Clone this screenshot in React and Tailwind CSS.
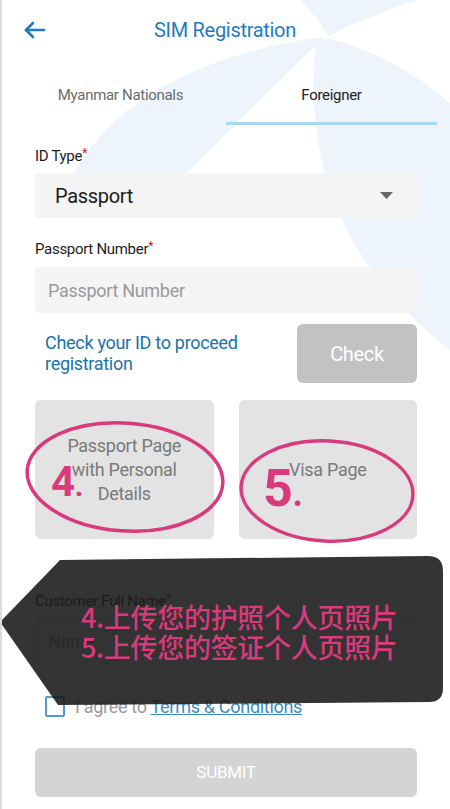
import React from 'react';

// red asterisk for required labels
const Req = () => <span className="text-[#c8102e] text-[12px] leading-none relative -top-[4px]">*</span>;

const Watermark = () => (
  <svg className="absolute left-0 top-0 pointer-events-none" width="450" height="400" viewBox="0 0 450 400">
    <path d="M298 0 L415 0 C380 12 350 24 326 36 C318 22 308 10 298 0 Z" fill="#edf4fb" />
    <path d="M62 200 C85 120 180 55 322 37 L186 172 C140 180 100 190 62 200 Z" fill="#edf4fb" />
    <path d="M314 40 C305 140 320 250 450 352 L450 105 C410 70 370 50 326 38 Z" fill="#edf4fb" />
  </svg>
);

const BackArrow = () => (
  <svg width="22" height="18" viewBox="0 0 22 18" fill="none" stroke="#1f7bc0" strokeWidth="2.6" strokeLinecap="round" strokeLinejoin="round">
    <path d="M20 9H2" />
    <path d="M9 2L2 9l7 7" />
  </svg>
);

const Annotations = () => (
  <>
    <svg className="absolute -left-[2px] top-0 pointer-events-none" width="450" height="809" viewBox="0 0 450 809">
      <ellipse cx="125" cy="477" rx="98" ry="54" transform="rotate(4 125 477)" fill="none" stroke="#d83a7c" strokeWidth="3.5" />
      <ellipse cx="327" cy="491" rx="86" ry="50" transform="rotate(3 327 491)" fill="none" stroke="#d83a7c" strokeWidth="3.5" />
      <path d="M60 560 L428 556 Q443 556 443 571 L443 688 Q443 702 429 702 L58 705 L0 622 Z" fill="rgba(27,27,27,0.89)" />
    </svg>
    <div className="absolute left-[49px] top-[461px] text-[42px] leading-none font-bold text-[#d83a7c] font-['Roboto',sans-serif]">4<span className="text-[30px]">.</span></div>
    <div className="absolute left-[261px] top-[463px] text-[52px] leading-none font-bold text-[#d83a7c] font-['Roboto',sans-serif]">5<span className="text-[36px]">.</span></div>
    <div className="absolute left-[79px] top-[602px] text-[27px] leading-[30px] font-medium text-[#d83a7c] font-['Noto_Sans_CJK_SC',sans-serif] whitespace-nowrap">
      <div>4.上传您的护照个人页照片</div>
      <div>5.上传您的签证个人页照片</div>
    </div>
  </>
);

export default function App() {
  return (
    <div className="relative w-[450px] h-[809px] overflow-hidden bg-white border-l-2 border-[#dcdcdc] font-['Roboto',sans-serif] tracking-[-0.3px]">
      <Watermark />

      <div className="relative">
        {/* header */}
        <div className="flex items-center h-[60px] -ml-[2px]">
          <div className="w-[60px] pl-[24px] flex items-center"><BackArrow /></div>
          <div className="flex-1 text-center text-[20px] leading-[24px] text-[#1f7bbf]">SIM Registration</div>
          <div className="w-[60px]" />
        </div>

        {/* tabs */}
        <div className="flex px-[13px]">
          <div className="flex-1 text-center pt-[25px] pb-[20px] text-[15px] leading-[20px] text-[#6b6b6b]">Myanmar Nationals</div>
          <div className="flex-1 text-center pt-[25px] pb-[17px] text-[15px] leading-[20px] text-[#222] border-b-[3px] border-[#a9d6f2]">Foreigner</div>
        </div>

        <div className="px-[33px]">
          <div className="mt-[21px] text-[15px] leading-[20px] text-[#1c1c1c]">ID Type<Req /></div>
          <div className="mt-[7px] h-[45px] bg-[#f4f4f4] rounded-[3px] flex items-center justify-between pl-[20px] pr-[24px]">
            <span className="text-[20px] text-[#1a1a1a]">Passport</span>
            <svg width="13" height="7" viewBox="0 0 13 7"><path d="M0 0h13L6.5 7z" fill="#666" /></svg>
          </div>

          <div className="mt-[21px] text-[15px] leading-[20px] text-[#1c1c1c]">Passport Number<Req /></div>
          <div className="mt-[8px] h-[46px] bg-[#f4f4f4] rounded-[3px] flex items-center pl-[13px]">
            <span className="text-[18px] text-[#9a9a9a]">Passport Number</span>
          </div>

          <div className="mt-[11px] flex items-start justify-between">
            <div className="pt-[8px] pl-[10px] text-[18px] leading-[21px] text-[#1c72aa]">
              Check your ID to proceed<br />registration
            </div>
            <div className="w-[120px] h-[59px] rounded-[6px] bg-[#c2c2c2] flex items-center justify-center text-[20px] text-white">Check</div>
          </div>

          <div className="mt-[17px] grid grid-cols-2 gap-[25px]">
            <div className="h-[139px] rounded-[6px] bg-[#e3e3e3] flex items-center justify-center text-center text-[18px] leading-[24px] text-[#7a7a7a]">
              Passport Page<br />with Personal<br />Details
            </div>
            <div className="h-[139px] rounded-[6px] bg-[#e3e3e3] flex items-center justify-center text-center text-[18px] leading-[24px] text-[#7a7a7a]">
              Visa Page
            </div>
          </div>

          <div className="mt-[52px] text-[15px] leading-[20px] text-[#1c1c1c]">Customer Full Name<Req /></div>
          <div className="mt-[7px] h-[46px] bg-[#f4f4f4] rounded-[3px] flex items-center pl-[13px]">
            <span className="text-[18px] text-[#9a9a9a]">Name</span>
          </div>

          <div className="mt-[32px] flex items-center gap-[10px] pl-[10px]">
            <div className="w-[20px] h-[21px] border-2 border-[#4f9bd0] rounded-[2px]" />
            <span className="text-[18px] leading-[21px] text-[#9a9a9a]">
              I agree to <span className="text-[#3a8bbf] underline">Terms &amp; Conditions</span>
            </span>
          </div>

          <div className="mt-[31px] h-[49px] rounded-[6px] bg-[#d4d4d4] flex items-center justify-center text-[17px] text-white">SUBMIT</div>
        </div>
      </div>

      <Annotations />
    </div>
  );
}
